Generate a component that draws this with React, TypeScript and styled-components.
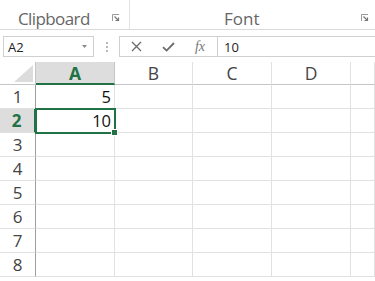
import React from "react";
import styled, { createGlobalStyle } from "styled-components";

const Global = createGlobalStyle`
  html, body { margin: 0; padding: 0; background: #fff; }
  body { width: 375px; height: 281px; overflow: hidden; font-family: "Open Sans", "Noto Sans", sans-serif; }
`;

const Page = styled.div`
  width: 375px;
  height: 281px;
  display: flex;
  flex-direction: column;
  background: #fff;
  overflow: hidden;
`;

const Ribbon = styled.div`
  height: 30px;
  display: flex;
  border-bottom: 1px solid #dadada;
  box-sizing: border-box;
`;

const Group = styled.div<{ $w?: number; $lead: number }>`
  position: relative;
  ${(p) => (p.$w ? `width: ${p.$w}px; flex: none;` : "flex: 1;")}
  border-right: ${(p) => (p.$w ? "1px solid #e3e3e3" : "none")};
  box-sizing: border-box;
  display: flex;
  align-items: flex-end;
  padding-left: ${(p) => p.$lead}px;
  padding-bottom: 0;
`;

const GroupLabel = styled.span<{ $ls?: number }>`
  font-family: "Open Sans", "Noto Sans", sans-serif;
  font-size: 17px;
  line-height: 20px;
  color: #666;
  letter-spacing: ${(p) => p.$ls ?? 0}px;
`;

const Launcher = styled.svg<{ $x: number }>`
  position: absolute;
  left: ${(p) => p.$x}px;
  top: 14px;
`;

const FormulaBar = styled.div`
  height: 32px;
  display: flex;
  align-items: flex-start;
  padding-top: 6px;
  box-sizing: border-box;
`;

const NameBox = styled.div`
  margin-left: 3px;
  width: 91px;
  height: 21px;
  border: 1px solid #d0d0d0;
  box-sizing: border-box;
  display: flex;
  align-items: center;
  justify-content: space-between;
  padding: 0 6px 0 4px;
  font-family: "Open Sans", "Noto Sans", sans-serif;
  font-size: 13px;
  color: #222;
`;

const Dots = styled.div`
  width: 25px;
  height: 21px;
  display: flex;
  flex-direction: column;
  align-items: center;
  justify-content: center;
  gap: 2px;
  & > i { width: 2px; height: 2px; background: #b9b9b9; display: block; }
`;

const EditArea = styled.div`
  flex: 1;
  height: 21px;
  border: 1px solid #d0d0d0;
  border-right: none;
  box-sizing: border-box;
  display: flex;
`;

const Buttons = styled.div`
  width: 97px;
  display: flex;
  align-items: center;
  border-right: 1px solid #d0d0d0;
`;

const Btn = styled.div`
  width: 32px;
  height: 19px;
  display: flex;
  align-items: center;
  justify-content: center;
  color: #666;
`;

const Fx = styled.span`
  font-family: "Liberation Serif", "DejaVu Serif", serif;
  font-style: italic;
  font-size: 14px;
  color: #777;
`;

const Input = styled.div`
  flex: 1;
  display: flex;
  align-items: center;
  padding-left: 6px;
  font-family: "Open Sans", "Noto Sans", sans-serif;
  font-size: 13px;
  color: #222;
`;

const Sheet = styled.div`
  display: grid;
  grid-template-columns: 36px 79px 78px 79px 79px 1fr;
  grid-template-rows: 23px repeat(8, 24px);
`;

const Corner = styled.div`
  position: relative;
  border-right: 1px solid #c6c6c6;
  border-bottom: 1px solid #c6c6c6;
  box-sizing: border-box;
  background: #fff;
  & > svg { position: absolute; right: 2px; bottom: 2px; }
`;

const ColHead = styled.div<{ $sel?: boolean }>`
  box-sizing: border-box;
  border-right: 1px solid ${(p) => (p.$sel ? "#c6c6c6" : "#e1e1e1")};
  border-bottom: ${(p) => (p.$sel ? "2px solid #217346" : "1px solid #c6c6c6")};
  background: ${(p) => (p.$sel ? "#dddddd" : "#fff")};
  color: ${(p) => (p.$sel ? "#217346" : "#444")};
  font-weight: ${(p) => (p.$sel ? 700 : 400)};
  font-family: "Open Sans", "Noto Sans", sans-serif;
  font-size: 17.5px;
  display: flex;
  align-items: center;
  justify-content: center;
  padding-top: ${(p) => (p.$sel ? 1 : 0)}px;
`;

const RowHead = styled.div<{ $sel?: boolean }>`
  box-sizing: border-box;
  border-right: ${(p) => (p.$sel ? "2px solid #217346" : "1px solid #9e9e9e")};
  border-bottom: 1px solid #e1e1e1;
  background: ${(p) => (p.$sel ? "#dddddd" : "#fff")};
  color: ${(p) => (p.$sel ? "#217346" : "#444")};
  font-weight: ${(p) => (p.$sel ? 700 : 400)};
  font-family: "Open Sans", "Noto Sans", sans-serif;
  font-size: 17px;
  display: flex;
  align-items: center;
  justify-content: center;
  padding-right: ${(p) => (p.$sel ? 1 : 0)}px;
`;

const Cell = styled.div<{ $sel?: boolean }>`
  position: relative;
  box-sizing: border-box;
  border-right: 1px solid #e1e1e1;
  border-bottom: 1px solid #e1e1e1;
  display: flex;
  align-items: center;
  justify-content: flex-end;
  padding-right: 3px;
  font-family: "Open Sans", "Noto Sans", sans-serif;
  font-size: 16.5px;
  color: #111;
  ${(p) =>
    p.$sel
      ? `
    outline: 2px solid #217346;
    outline-offset: -1px;
    z-index: 1;
  `
      : ""}
`;

const Handle = styled.span`
  position: absolute;
  right: -4px;
  bottom: -4px;
  width: 5px;
  height: 5px;
  background: #217346;
  border: 1px solid #fff;
  z-index: 2;
`;

const cols = ["A", "B", "C", "D", ""];
const data: Record<string, string> = { A1: "5", A2: "10" };

const LauncherIcon = ({ x }: { x: number }) => (
  <Launcher $x={x} width="8" height="8" viewBox="0 0 8 8">
    <path d="M0.5 7V0.5H7" fill="none" stroke="#9a9a9a" strokeWidth="1" />
    <path d="M2.5 2.5L6.5 6.5M6.5 3.5V6.5H3.5" fill="none" stroke="#777" strokeWidth="1.2" />
  </Launcher>
);

export default function App() {
  return (
    <Page>
      <Global />
      <Ribbon>
        <Group $w={130} $lead={18}>
          <GroupLabel $ls={-0.6}>Clipboard</GroupLabel>
          <LauncherIcon x={112} />
        </Group>
        <Group $lead={94}>
          <GroupLabel>Font</GroupLabel>
          <LauncherIcon x={231} />
        </Group>
      </Ribbon>
      <FormulaBar>
        <NameBox>
          <span>A2</span>
          <svg width="5" height="3" viewBox="0 0 5 3">
            <path d="M0 0H5L2.5 3Z" fill="#888" />
          </svg>
        </NameBox>
        <Dots>
          <i />
          <i />
          <i />
        </Dots>
        <EditArea>
          <Buttons>
            <Btn>
              <svg width="11" height="11" viewBox="0 0 11 11">
                <path d="M1 1L10 10M10 1L1 10" stroke="#6a6a6a" strokeWidth="1.3" />
              </svg>
            </Btn>
            <Btn>
              <svg width="13" height="10" viewBox="0 0 13 10">
                <path d="M1 5.2L4.6 8.6L12 1" fill="none" stroke="#6a6a6a" strokeWidth="1.8" />
              </svg>
            </Btn>
            <Btn>
              <Fx>fx</Fx>
            </Btn>
          </Buttons>
          <Input>10</Input>
        </EditArea>
      </FormulaBar>
      <Sheet>
        <Corner>
          <svg width="19" height="17" viewBox="0 0 19 17">
            <path d="M19 0V17H0Z" fill="#dcdcdc" />
          </svg>
        </Corner>
        {cols.map((c, i) => (
          <ColHead key={"h" + i} $sel={c === "A"}>
            {c}
          </ColHead>
        ))}
        {Array.from({ length: 8 }, (_, r) => (
          <React.Fragment key={r}>
            <RowHead $sel={r === 1}>{r + 1}</RowHead>
            {cols.map((c, i) => {
              const id = c + (r + 1);
              const sel = id === "A2";
              return (
                <Cell key={id + i} $sel={sel}>
                  {data[id] ?? ""}
                  {sel && <Handle />}
                </Cell>
              );
            })}
          </React.Fragment>
        ))}
      </Sheet>
    </Page>
  );
}
